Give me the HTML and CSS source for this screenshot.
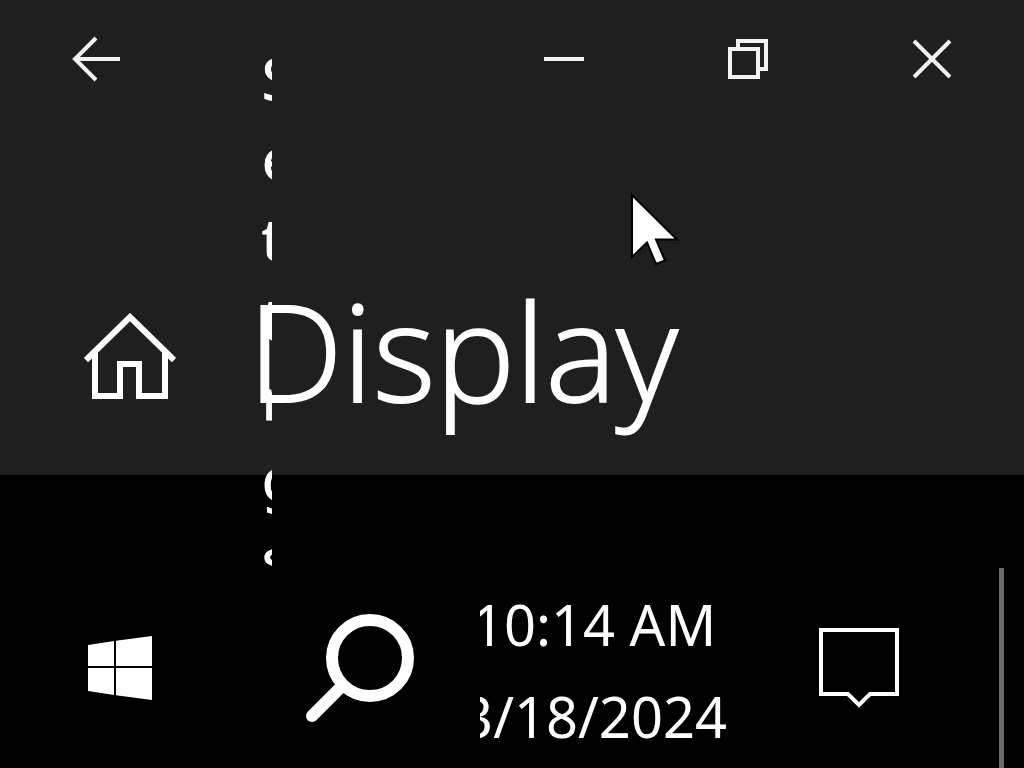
FILE: index.html
```
<!DOCTYPE html>
<html lang="en">
<head>
    <meta charset="UTF-8">
    <meta name="viewport" content="width=device-width, initial-scale=1.0">
    <link rel="stylesheet" href="styles.css">
    <title>Display</title>
</head>
<body>
    <main class="window">
        <header class="titlebar">
            <button class="back" aria-label="Back">
                <svg width="50" height="46" viewBox="0 0 50 46"><path d="M49 23H4M25 2L4 23l21 21" /></svg>
            </button>
            <!-- one letter per line, cut off by the narrow column -->
            <div class="app-name">
                <span>S</span><span>e</span><span>t</span><span>ti</span><span>n</span><span>g</span><span>s</span>
            </div>
            <div class="controls">
                <button aria-label="Minimize">
                    <svg width="40" height="40" viewBox="0 0 40 40"><path d="M0 20h40" /></svg>
                </button>
                <button aria-label="Restore">
                    <svg width="40" height="40" viewBox="0 0 40 40"><path d="M2 10h28v28H2zM10 10V2h28v28h-8" /></svg>
                </button>
                <button aria-label="Close">
                    <svg width="40" height="40" viewBox="0 0 40 40"><path d="M2 2l36 36M38 2L2 38" /></svg>
                </button>
            </div>
        </header>
        <div class="page-head">
            <button class="home" aria-label="Home">
                <svg width="92" height="88" viewBox="0 0 92 88">
                    <path d="M2 47L46 4l44 43M11 40v43h25V51h19v32h26V40" />
                </svg>
            </button>
            <h1>Display</h1>
        </div>
        <svg class="cursor" width="52" height="76" viewBox="0 0 52 76"><path d="M3 4L48 48.500H27L36 69.500L27 73L18 51.500L3 66z" /></svg>
    </main>

    <footer class="taskbar">
        <button class="task" aria-label="Start">
            <svg width="64" height="64" viewBox="0 0 64 64"><path class="fill" d="M0 9l26-4v25H0zM28 4.700L64 0v30H28zM0 32h26v27L0 55zM28 32h36v32l-36-4.700z" /></svg>
        </button>
        <button class="task search" aria-label="Search">
            <svg width="108" height="108" viewBox="0 0 108 108">
                <circle cx="64" cy="44" r="38" />
                <path d="M37 71L6 102" />
            </svg>
        </button>
        <button class="clock">
            <time>10:14 AM<br>3/18/2024</time>
        </button>
        <button class="task" aria-label="Notifications">
            <svg width="80" height="80" viewBox="0 0 80 80"><path d="M2 2h76v64H51L40 77 29 66H2z" /></svg>
        </button>
        <div class="show-desktop"></div>
    </footer>
</body>
</html>
```

FILE: styles.css
```
* {
    margin: 0;
    padding: 0;
    box-sizing: border-box;
}
body {
    display: flex;
    flex-direction: column;
    min-height: 100vh;
    background-color: #000;
    color: #fff;
    font-family: "Noto Sans", "Open Sans", sans-serif;
}
button {
    display: flex;
    justify-content: center;
    align-items: center;
    flex-shrink: 0;
    border: none;
    background: none;
    color: inherit;
    font: inherit;
}
svg {
    display: block;
    fill: none;
    stroke: #fff;
    stroke-width: 4;
}

/* settings window */
.window {
    position: relative;
    background-color: #1f1f1f;
}
.titlebar {
    display: flex;
    justify-content: space-between;
    height: 118px;
}
.titlebar svg {stroke: #f2f2f2;}
.back {width: 192px;}
.controls {display: flex;}
.controls button {width: 184px;}
.app-name {
    position: absolute;
    z-index: 1;
    top: 38px;
    left: 262px;
    width: 10px;
    height: 530px;
    overflow: hidden;
    font-size: 56px;
    line-height: 80px;
    white-space: nowrap;
    -webkit-text-stroke: 1px #fff;
}
.app-name span {display: block;}
.page-head {
    display: flex;
    align-items: center;
    gap: 4px;
    padding: 162px 0 41px 16px;
}
.home {width: 228px;}
.home svg {stroke-width: 6;}
h1 {
    padding-bottom: 14px;
    font-family: "Open Sans", "Noto Sans", sans-serif;
    font-size: 134px;
    font-weight: 300;
    line-height: 140px;
    -webkit-text-stroke: 2px #fff;
}
.cursor {
    position: absolute;
    top: 191px;
    left: 629px;
    fill: #fff;
    stroke: #000;
    stroke-width: 2;
}

/* taskbar */
.taskbar {
    display: flex;
    flex: 1;
    padding: 93px 20px 0 0;
}
.task {
    width: 240px;
    height: 200px;
}
.task .fill {
    fill: #fff;
    stroke: none;
}
.search svg {
    stroke-width: 12;
    stroke-linecap: round;
}
.clock {
    flex: 1;
    justify-content: flex-end;
    height: 200px;
    padding: 4px 12px 0 0;
    overflow: hidden;
    font-size: 56px;
    line-height: 92px;
    white-space: nowrap;
}
.show-desktop {
    width: 5px;
    height: 200px;
    margin-left: 20px;
    background-color: #6b6b6b;
}
```
